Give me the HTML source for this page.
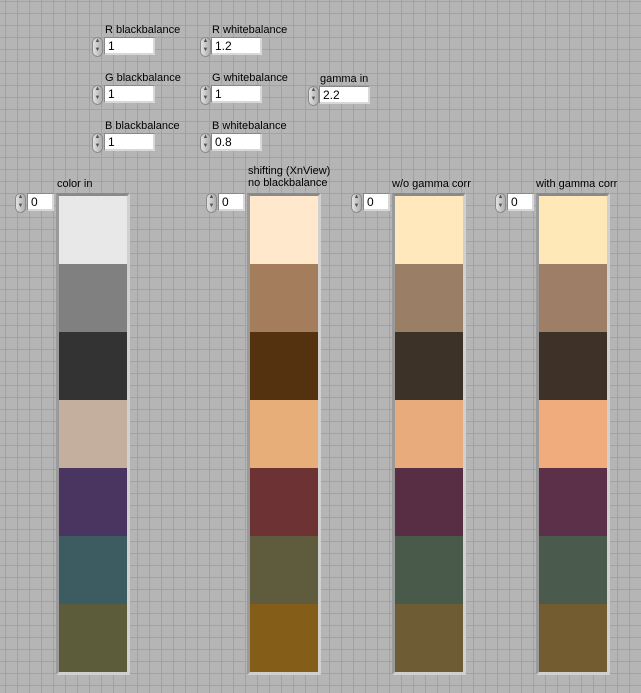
<!DOCTYPE html><html><head><style>
body{margin:0;width:641px;height:693px;overflow:hidden;background-color:#b5b5b5;
background-image:linear-gradient(to right,#a2a2a2 1px,transparent 1px),linear-gradient(to bottom,#a2a2a2 1px,transparent 1px);
background-size:12px 12px;background-position:5px 1px;font-family:"Liberation Sans",sans-serif;font-size:11px;color:#000;position:relative}
.l{position:absolute;white-space:nowrap;line-height:12px}
.sp{position:absolute;width:11px;height:20px;border-radius:6px;background:linear-gradient(to right,#e8e8e8,#a8a8a8);box-shadow:0 0 0 1px #8a8a8a inset;font-size:6px;text-align:center;line-height:9px;color:#555}
.bx{position:absolute;height:17px;background:#fff;border-right:2px solid #d8d8d8;border-bottom:2px solid #d8d8d8;box-shadow:-1px -1px 0 #888;font-size:12px;line-height:17px;padding-left:3px;box-sizing:border-box}
.col{position:absolute;top:193px;width:68px;border:3px solid #8e8e8e;border-right-color:#d0d0d0;border-bottom-color:#d0d0d0;border-top-color:#8a8a8a;border-left-color:#9a9a9a}
.col div{height:68px}
</style></head><body>
<div class="l" style="left:105px;top:24px">R blackbalance</div>
<div class="sp" style="left:92px;top:37px">▲<br>▼</div><div class="bx" style="left:105px;top:38px;width:50px">1</div>
<div class="l" style="left:212px;top:24px">R whitebalance</div>
<div class="sp" style="left:200px;top:37px">▲<br>▼</div><div class="bx" style="left:212px;top:38px;width:50px">1.2</div>
<div class="l" style="left:105px;top:72px">G blackbalance</div>
<div class="sp" style="left:92px;top:85px">▲<br>▼</div><div class="bx" style="left:105px;top:86px;width:50px">1</div>
<div class="l" style="left:212px;top:72px">G whitebalance</div>
<div class="sp" style="left:200px;top:85px">▲<br>▼</div><div class="bx" style="left:212px;top:86px;width:50px">1</div>
<div class="l" style="left:320px;top:73px">gamma in</div>
<div class="sp" style="left:308px;top:86px">▲<br>▼</div><div class="bx" style="left:320px;top:87px;width:50px">2.2</div>
<div class="l" style="left:105px;top:120px">B blackbalance</div>
<div class="sp" style="left:92px;top:133px">▲<br>▼</div><div class="bx" style="left:105px;top:134px;width:50px">1</div>
<div class="l" style="left:212px;top:120px">B whitebalance</div>
<div class="sp" style="left:200px;top:133px">▲<br>▼</div><div class="bx" style="left:212px;top:134px;width:50px">0.8</div>

<div class="l" style="left:57px;top:178px">color in</div>
<div class="l" style="left:248px;top:165px">shifting (XnView)<br>no blackbalance</div>
<div class="l" style="left:392px;top:178px">w/o gamma corr</div>
<div class="l" style="left:536px;top:178px">with gamma corr</div>

<div class="sp" style="left:15px;top:193px">▲<br>▼</div><div class="bx" style="left:28px;top:194px;width:26px">0</div>
<div class="sp" style="left:206px;top:193px">▲<br>▼</div><div class="bx" style="left:219px;top:194px;width:26px">0</div>
<div class="sp" style="left:351px;top:193px">▲<br>▼</div><div class="bx" style="left:364px;top:194px;width:26px">0</div>
<div class="sp" style="left:495px;top:193px">▲<br>▼</div><div class="bx" style="left:508px;top:194px;width:26px">0</div>

<div class="col" style="left:56px"><div style="background:#e8e8e8"></div><div style="background:#808080"></div><div style="background:#333333"></div><div style="background:#c4ae9e"></div><div style="background:#4a3460"></div><div style="background:#3c5c62"></div><div style="background:#5c5c3a"></div></div>
<div class="col" style="left:247px"><div style="background:#ffe8cc"></div><div style="background:#a47e5c"></div><div style="background:#543210"></div><div style="background:#e8ae7a"></div><div style="background:#6c3234"></div><div style="background:#5e5c3c"></div><div style="background:#845e18"></div></div>
<div class="col" style="left:392px"><div style="background:#ffe8bc"></div><div style="background:#9a7e66"></div><div style="background:#3c3228"></div><div style="background:#e8ac7c"></div><div style="background:#582e44"></div><div style="background:#4a5a4a"></div><div style="background:#6e5c34"></div></div>
<div class="col" style="left:536px"><div style="background:#ffe8b8"></div><div style="background:#9e7e66"></div><div style="background:#3e3228"></div><div style="background:#f0ac7c"></div><div style="background:#5c3048"></div><div style="background:#4a5a4c"></div><div style="background:#725c30"></div></div>
</body></html>
